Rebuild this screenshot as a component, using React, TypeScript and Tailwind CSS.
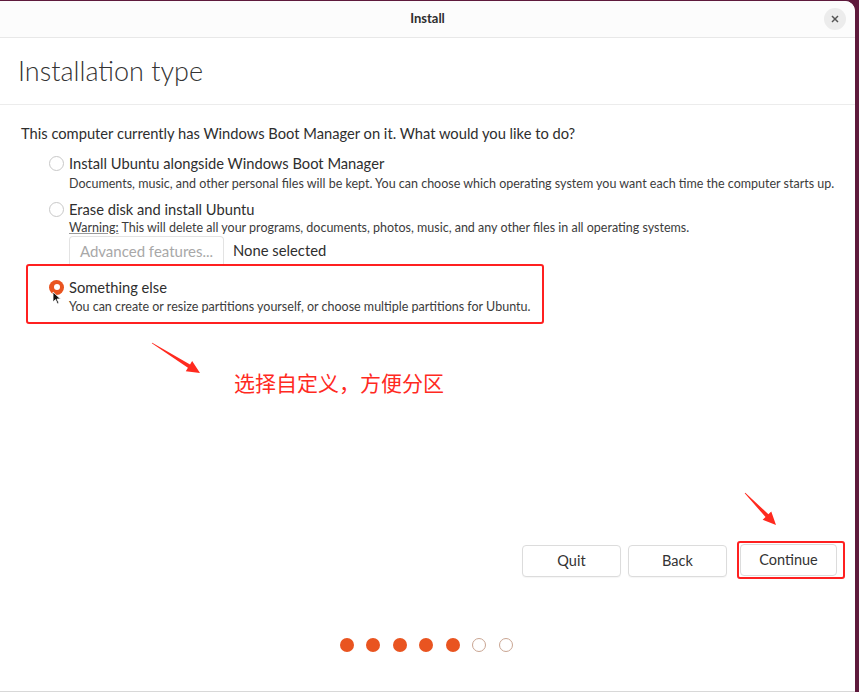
import React from "react";

const font = { fontFamily: "Lato, 'Noto Sans CJK SC', sans-serif" };

function Arrow({ x1, y1, x2, y2 }: { x1: number; y1: number; x2: number; y2: number }) {
  // tapered annotation arrow, drawn in local coords
  const dx = x2 - x1;
  const dy = y2 - y1;
  const len = Math.hypot(dx, dy);
  const ux = dx / len;
  const uy = dy / len;
  const px = -uy;
  const py = ux;
  const head = 13;
  const hw = 6;
  const bx = x2 - ux * head;
  const by = y2 - uy * head;
  const pts = [
    [x1 + px * 0.4, y1 + py * 0.4],
    [bx + px * 2, by + py * 2],
    [bx + px * hw, by + py * hw],
    [x2, y2],
    [bx - px * hw, by - py * hw],
    [bx - px * 2, by - py * 2],
    [x1 - px * 0.4, y1 - py * 0.4],
  ]
    .map((p) => p.join(","))
    .join(" ");
  return (
    <svg className="absolute left-0 top-0 pointer-events-none" width="859" height="692">
      <polygon points={pts} fill="#ff2a1f" />
    </svg>
  );
}

function Radio({ checked }: { checked?: boolean }) {
  return checked ? (
    <span className="w-[15px] h-[15px] rounded-full bg-[#e95420] flex items-center justify-center shrink-0">
      <span className="w-[6px] h-[6px] rounded-full bg-white" />
    </span>
  ) : (
    <span className="w-[15px] h-[15px] rounded-full border border-[#c8c8c8] bg-white shrink-0" />
  );
}

function Option({
  label,
  desc,
  checked,
  descGap = "mt-[2px]",
}: {
  label: string;
  desc: React.ReactNode;
  checked?: boolean;
  descGap?: string;
}) {
  return (
    <div className="flex flex-col">
      <div className="flex items-center gap-[5px]">
        <Radio checked={checked} />
        <span className="text-[14.7px] leading-[20px] text-[#2e2e2e]">{label}</span>
      </div>
      <div className={`pl-[20px] ${descGap} text-[12.5px] leading-[16px] text-[#3c3c3c] whitespace-nowrap`}>
        {desc}
      </div>
    </div>
  );
}

export default function App() {
  return (
    <div className="relative w-[859px] h-[692px] bg-[#5e1a3c] overflow-hidden" style={font}>
      <div className="mt-[1px] w-[855px] h-[691px] bg-white rounded-tr-[10px] flex flex-col border-b border-[#d8d8d8]">
        {/* title bar */}
        <div className="h-[37px] shrink-0 flex items-center justify-center relative border-b border-[#e8e8e8] bg-[#fcfcfc] rounded-tr-[10px]">
          <span className="text-[13px] font-bold text-[#2e2e2e]">Install</span>
          <button className="absolute right-[9px] top-[7px] w-[22px] h-[22px] rounded-full bg-[#ececec] flex items-center justify-center">
            <svg width="8" height="8" viewBox="0 0 8 8" stroke="#555" strokeWidth="1.5">
              <line x1="1" y1="1" x2="7" y2="7" />
              <line x1="7" y1="1" x2="1" y2="7" />
            </svg>
          </button>
        </div>

        {/* heading */}
        <div className="h-[67px] shrink-0 flex items-center px-[18px] border-b border-[#ececec]">
          <h1 className="text-[27px] font-light text-[#333]">Installation type</h1>
        </div>

        {/* body */}
        <div className="flex-1 flex flex-col pl-[21px] pt-[18px]">
          <p className="text-[14.7px] leading-[20px] text-[#2e2e2e]">
            This computer currently has Windows Boot Manager on it. What would you like to do?
          </p>

          <div className="pl-[28px] mt-[10px] flex flex-col gap-[8px]">
            <Option
              descGap="mt-[3px]"
              label="Install Ubuntu alongside Windows Boot Manager"
              desc="Documents, music, and other personal files will be kept. You can choose which operating system you want each time the computer starts up."
            />
            <div className="flex flex-col -mt-[1px]">
              <Option
                descGap="mt-[1px]"
                label="Erase disk and install Ubuntu"
                desc={
                  <>
                    <span className="underline decoration-[#999]">Warning:</span> This will delete all your programs,
                    documents, photos, music, and any other files in all operating systems.
                  </>
                }
              />
              <div className="pl-[20px] flex items-center">
                <div className="w-[155px] h-[29px] border border-[#e3e3e3] border-b-0 rounded-t-[4px] flex items-center justify-center text-[15px] text-[#a8a8a8]">
                  Advanced features...
                </div>
                <span className="ml-[9px] text-[14.8px] text-[#2e2e2e]">None selected</span>
              </div>
            </div>
          </div>

          {/* highlighted option */}
          <div className="relative -mt-[1px] ml-[5px] w-[518px] h-[60px] border-2 border-[#ff2020] rounded-[3px] pl-[21px] pt-[11px]">
            <Option
              checked
              label="Something else"
              desc="You can create or resize partitions yourself, or choose multiple partitions for Ubuntu."
            />
            {/* mouse pointer */}
            <svg className="absolute left-[24px] top-[25px]" width="10" height="14" viewBox="0 0 10 14">
              <path d="M1 1 L1 11 L3.5 8.6 L5.5 13 L7 12.3 L5 8 L8.5 8 Z" fill="#111" stroke="#fff" strokeWidth="0.8" />
            </svg>
          </div>

          <div className="mt-[43px] ml-[213px] text-[21px] leading-[30px] text-[#ff2a1f]" style={{ fontFamily: "'Noto Sans CJK SC', sans-serif" }}>
            选择自定义，方便分区
          </div>

          <div className="flex-1" />

          {/* buttons */}
          <div className="flex justify-end pr-[10px] gap-[7px]">
            <button className="w-[99px] h-[32px] border border-[#dcdcdc] rounded-[4px] bg-white text-[14.5px] text-[#333] shadow-[0_1px_1px_rgba(0,0,0,0.04)]">
              Quit
            </button>
            <button className="w-[99px] h-[32px] border border-[#dcdcdc] rounded-[4px] bg-white text-[14.5px] text-[#333] shadow-[0_1px_1px_rgba(0,0,0,0.04)]">
              Back
            </button>
            <div className="ml-[3px] -my-[4px] w-[108px] h-[38px] border-2 border-[#ff2020] rounded-[3px] flex items-center pl-[1px]">
              <button className="w-[97px] h-[32px] border border-[#dcdcdc] rounded-[4px] bg-white text-[14.5px] text-[#333]">
                Continue
              </button>
            </div>
          </div>

          {/* progress dots */}
          <div className="flex justify-center gap-[12.5px] mt-[61px] mb-[39px] pr-[24px]">
            {[0, 1, 2, 3, 4].map((i) => (
              <span key={i} className="w-[14px] h-[14px] rounded-full bg-[#e95420]" />
            ))}
            {[5, 6].map((i) => (
              <span key={i} className="w-[14px] h-[14px] rounded-full border-[1.5px] border-[#c9a592] bg-white" />
            ))}
          </div>
        </div>
      </div>

      <Arrow x1={152} y1={343} x2={200} y2={373} />
      <Arrow x1={745} y1={493} x2={776} y2={525} />
    </div>
  );
}
